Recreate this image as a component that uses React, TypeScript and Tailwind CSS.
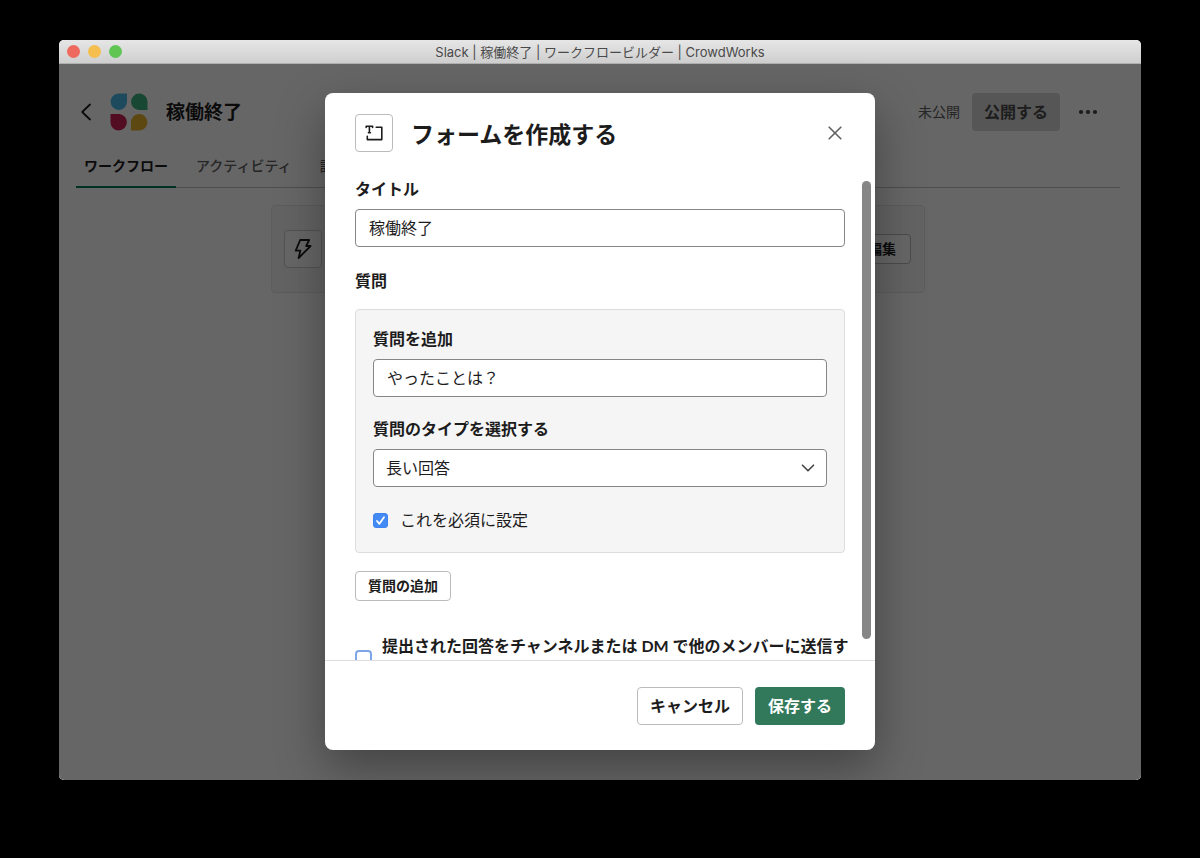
import React from "react";

const fieldClass =
  "block h-[38px] w-full rounded border border-[#868686] bg-white text-base text-[#1d1c1d] outline-none";
const labelClass = "block text-base leading-6 font-bold";

function WorkspaceLogo() {
  return (
    <svg width="38" height="38" viewBox="0 0 38 38" aria-hidden="true">
      <path d="M8.5 0.5H17V9a8.2 8.2 0 1 1-8.5-8.5Z" fill="#4cb9ea" />
      <path d="M37.5 17H29a8.2 8.2 0 1 1 8.5-8.5Z" fill="#3eb27f" />
      <path d="M0.5 21H9a8.2 8.2 0 1 1-8.5 8.5Z" fill="#ce2158" />
      <path d="M21 37.5V29a8.2 8.2 0 1 1 8.5 8.5Z" fill="#ecb32e" />
    </svg>
  );
}

function BoltIcon() {
  return (
    <svg width="20" height="22" viewBox="0 0 20 22" fill="none" stroke="#1d1c1d" strokeWidth="1.8" strokeLinejoin="round" aria-hidden="true">
      <path d="M7.2 2h9L13.2 8h4.4L5.6 20l1.8-7.4H2.7Z" />
    </svg>
  );
}

function FormIcon() {
  return (
    <svg width="20" height="18" viewBox="0 0 20 18" fill="none" stroke="#1d1c1d" strokeWidth="1.6" strokeLinecap="round" strokeLinejoin="round" aria-hidden="true">
      <path d="M2.2 3.4V2.2h6.4v1.2M5.4 2.2v6.6M4.4 8.8h2" />
      <path d="M12.2 3.2h5.6v12.4H3.3v-3.2" />
    </svg>
  );
}

function AppPage() {
  return (
    <div className="pt-[29px] pr-[21px] pl-[17px]">
      <header className="flex h-[38px] items-center">
        <button aria-label="戻る" className="flex w-5 items-center justify-center">
          <svg width="12" height="18" viewBox="0 0 12 18" fill="none" stroke="#1d1c1d" strokeWidth="1.8" strokeLinecap="round" strokeLinejoin="round">
            <path d="M10 1.5 2.2 9l7.8 7.5" />
          </svg>
        </button>
        <div className="ml-[14px]">
          <WorkspaceLogo />
        </div>
        <h1 className="ml-[18px] text-[19px] font-bold">稼働終了</h1>
        <div className="ml-auto flex items-center">
          <span className="text-sm text-[#616061]">未公開</span>
          <button className="ml-3 h-[38px] rounded bg-[#d7d7d7] px-3 text-base font-bold text-[#4a4a4a]">公開する</button>
          <button aria-label="その他" className="mr-[22px] ml-[18px]">
            <svg width="20" height="6" viewBox="0 0 20 6" fill="#454545">
              <circle cx="3" cy="3" r="2.1" />
              <circle cx="10" cy="3" r="2.1" />
              <circle cx="17" cy="3" r="2.1" />
            </svg>
          </button>
        </div>
      </header>
      <nav className="mt-[13px] flex h-11 gap-3 text-sm text-[#616061] shadow-[inset_0_-1px_0_#c4c4c4]">
        <a href="#workflow" className="flex items-center border-b-2 border-[#007a5a] px-2 pt-0.5 font-bold text-[#1d1c1d]">ワークフロー</a>
        <a href="#activity" className="flex items-center border-b-2 border-transparent px-2 pt-0.5 font-medium">アクティビティ</a>
        <a href="#settings" className="flex items-center border-b-2 border-transparent px-2 pt-0.5 font-medium">設定</a>
      </nav>
      <section className="mx-auto mt-[17px] flex h-[88px] max-w-[654px] items-center justify-between rounded border border-[#e6e6e6] bg-[#f8f8f8] pr-[13px] pl-3">
        <span className="flex size-[38px] items-center justify-center rounded border border-[#ccc] bg-white">
          <BoltIcon />
        </span>
        <button className="h-[30px] rounded border border-[#bbb] bg-white px-[14px] text-sm font-bold">編集</button>
      </section>
    </div>
  );
}

function FormDialog() {
  return (
    <div
      role="dialog"
      aria-labelledby="dialog-title"
      className="flex w-full max-w-[550px] flex-col overflow-hidden rounded-lg bg-white shadow-[0_18px_48px_rgba(0,0,0,0.35)]"
    >
      <header className="flex h-20 shrink-0 items-center px-[30px]">
        <span className="flex size-[38px] items-center justify-center rounded border border-[#bbb]">
          <FormIcon />
        </span>
        <h2 id="dialog-title" className="ml-[18px] pt-0.5 text-[23px] leading-8 font-bold">フォームを作成する</h2>
        <button aria-label="閉じる" className="ml-auto flex size-5 items-center justify-center">
          <svg width="14" height="14" viewBox="0 0 14 14" stroke="#616061" strokeWidth="1.6" strokeLinecap="round">
            <path d="m1.2 1.2 11.6 11.6M12.8 1.2 1.2 12.8" />
          </svg>
        </button>
      </header>

      <div className="relative min-h-0 flex-1 overflow-hidden px-[30px] pt-1">
        <label htmlFor="form-title" className={labelClass}>タイトル</label>
        <input id="form-title" defaultValue="稼働終了" className={`${fieldClass} mt-2 px-[13px] pb-[3px]`} />

        <h3 className="mt-[22px] text-base leading-6 font-bold">質問</h3>
        <div className="mt-4 rounded border border-[#ddd] bg-[#f5f5f5] px-[17px] pt-[17px] pb-5">
          <label htmlFor="question" className={labelClass}>質問を追加</label>
          <input id="question" defaultValue="やったことは？" className={`${fieldClass} mt-2 px-[13px] pb-[3px]`} />

          <label htmlFor="question-type" className={`${labelClass} mt-5`}>質問のタイプを選択する</label>
          <div className="relative mt-2">
            <select id="question-type" className={`${fieldClass} appearance-none px-3`}>
              <option>長い回答</option>
            </select>
            <svg className="pointer-events-none absolute top-3 right-3" width="14" height="14" viewBox="0 0 14 14" fill="none" stroke="#454545" strokeWidth="1.6" strokeLinecap="round" strokeLinejoin="round" aria-hidden="true">
              <path d="m1.5 4.2 5.5 5.6 5.5-5.6" />
            </svg>
          </div>

          <label className="mt-[21px] flex items-center gap-3 text-base leading-6">
            <span className="relative flex">
              <input type="checkbox" defaultChecked className="peer size-[15px] appearance-none rounded-[3px] border border-[#8a8a8a] bg-white checked:border-[#3f83f0] checked:bg-[#438af5]" />
              <svg className="pointer-events-none absolute inset-0 hidden peer-checked:block" width="15" height="15" viewBox="0 0 15 15" fill="none" stroke="#fff" strokeWidth="1.8" strokeLinecap="round" strokeLinejoin="round" aria-hidden="true">
                <path d="m4 8 2.4 2.8L11 4.2" />
              </svg>
            </span>
            これを必須に設定
          </label>
        </div>

        <button className="mt-[18px] block h-[30px] rounded border border-[#bbb] px-3 text-sm font-bold">質問の追加</button>

        <label className="mt-[33px] flex items-center gap-[10px] text-base leading-6 font-bold">
          <input type="checkbox" className="size-[17px] shrink-0 appearance-none rounded-[4px] border-2 border-[#7ea6e6] bg-white" />
          <span className="-mr-2">提出された回答をチャンネルまたは DM で他のメンバーに送信する</span>
        </label>

        <div className="absolute top-2 right-1 h-[458px] w-[9px] rounded-full bg-[#868686]" />
      </div>

      <footer className="flex h-[90px] shrink-0 items-center justify-end gap-3 border-t border-[#ddd] px-[30px] text-base font-bold">
        <button className="h-[38px] rounded border border-[#bbb] px-3">キャンセル</button>
        <button className="h-[38px] rounded bg-[#31795a] px-[13px] text-white">保存する</button>
      </footer>
    </div>
  );
}

export default function App() {
  return (
    <div className="flex h-screen flex-col bg-black px-[59px] pt-10 pb-[78px] font-['Lato','Noto_Sans_CJK_JP',sans-serif] text-[#1d1c1d]" lang="ja">
      <div className="flex min-h-0 flex-1 flex-col overflow-hidden rounded-[5px] bg-white">
        <div className="grid h-6 shrink-0 grid-cols-[1fr_auto_1fr] items-center border-b border-[#b0b0b0] bg-linear-to-b from-[#e6e6e6] to-[#cfcfcf] px-2">
          <div className="flex gap-2">
            <span className="size-[13px] rounded-full bg-[#ee6a5f]" />
            <span className="size-[13px] rounded-full bg-[#f5bf4f]" />
            <span className="size-[13px] rounded-full bg-[#61c554]" />
          </div>
          <p className="font-['Inter','Noto_Sans_CJK_JP',sans-serif] text-[13px] leading-5 text-[#4a4a4a]">
            Slack | 稼働終了 | ワークフロービルダー | CrowdWorks
          </p>
        </div>
        <div className="relative min-h-0 flex-1 bg-white">
          <AppPage />
          <div className="absolute inset-0 flex justify-center bg-black/60 px-4 pt-[29px] pb-[30px]">
            <FormDialog />
          </div>
        </div>
      </div>
    </div>
  );
}
